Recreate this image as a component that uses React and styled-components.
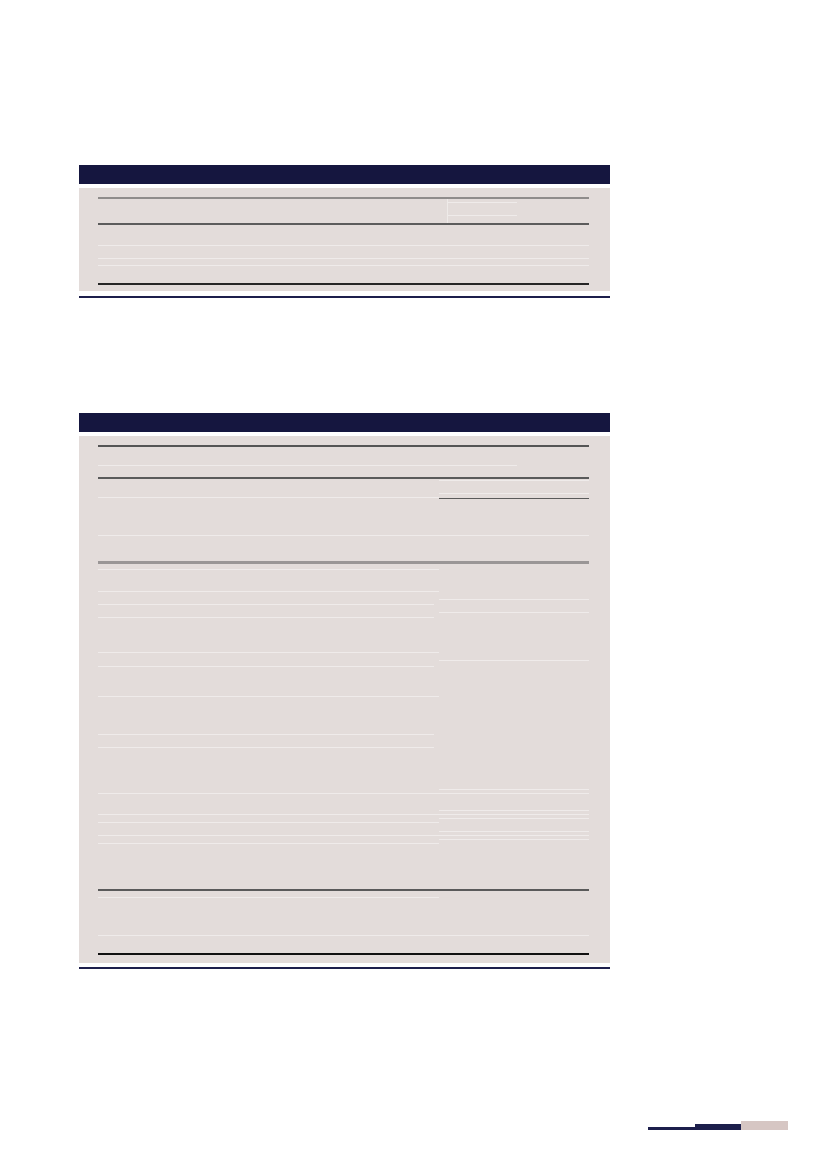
import React from 'react'
import styled, { createGlobalStyle } from 'styled-components'

const GlobalStyle = createGlobalStyle`
  html, body {
    margin: 0;
    padding: 0;
    background: #ffffff;
    font-family: "Liberation Sans", Arial, sans-serif;
  }
  * { box-sizing: border-box; }
`

const Page = styled.div`
  width: 827px;
  height: 1169px;
  padding: 165px 0 0 79px;
  display: flex;
  flex-direction: column;
  background: #fff;
`

const Section = styled.section`
  width: 531px;
  display: flex;
  flex-direction: column;
  margin-bottom: ${p => p.gap || 0}px;
`

const HeaderBar = styled.div`
  height: 19px;
  background: #15163f;
`

const Body = styled.div`
  margin-top: 4px;
  height: ${p => p.h}px;
  background: #e3dcda;
  padding: 9px 21px 0 19px;
`

const BottomRule = styled.div`
  margin-top: ${p => p.m || 5}px;
  height: 2px;
  background: #1d1f4c;
`

const Table = styled.div`
  width: 491px;
  display: flex;
  flex-direction: column;
`

const Rule = styled.div`
  height: ${p => p.t || 1}px;
  background: ${p => p.c || '#555'};
`

const Band = styled.div`
  display: flex;
  height: ${p => p.h}px;
`

const Col = styled.div`
  width: ${p => p.w}px;
  display: flex;
  flex-direction: column;
  border-left: ${p => (p.edge ? '1px solid #eeeae8' : 'none')};
`

const tones = {
  l: '1px solid #efebea',
  d: '1.5px solid #5a5a5a',
  n: 'none',
}

const Seg = styled.div`
  height: ${p => p.h}px;
  flex: none;
  margin-right: ${p => (p.short ? 5 : 0)}px;
  border-bottom: ${p => tones[p.kind]};
`

const Fill = styled.div`
  flex: 1;
`

const Footer = styled.div`
  margin-top: auto;
  margin-bottom: 39px;
  align-self: flex-end;
  margin-right: 39px;
  display: flex;
  align-items: flex-end;
`

const FootBar = styled.div`
  width: ${p => p.w}px;
  height: ${p => p.h}px;
  background: ${p => p.c};
`

// each column: list of [y, kind, short] boundaries measured from page top
function Columns({ top, bottom, cols }) {
  return (
    <Band h={bottom - top}>
      {cols.map((c, i) => {
        let prev = top
        return (
          <Col key={i} w={c.w} edge={c.edge}>
            {c.segs.map(([y, kind, short], j) => {
              const h = y - prev
              prev = y
              return <Seg key={j} h={h} kind={kind} short={short} />
            })}
            <Fill />
          </Col>
        )
      })}
    </Band>
  )
}

function FirstTable() {
  return (
    <Table>
      <Rule t={2} c="#8f8c8b" />
      <Columns
        top={199}
        bottom={223}
        cols={[
          { w: 349, segs: [] },
          { w: 70, edge: true, segs: [[203, 'l'], [216, 'l']] },
          { w: 72, segs: [] },
        ]}
      />
      <Rule t={2} c="#5c5c5c" />
      <Columns
        top={225}
        bottom={283}
        cols={[{ w: 491, segs: [[246, 'l'], [259, 'l'], [266, 'l']] }]}
      />
      <Rule t={2} c="#262626" />
    </Table>
  )
}

function SecondTable() {
  return (
    <Table>
      <Rule t={2} c="#555" />
      <Columns
        top={447}
        bottom={477}
        cols={[
          { w: 419, segs: [[466, 'l']] },
          { w: 72, segs: [] },
        ]}
      />
      <Rule t={2} c="#5a5a5a" />
      <Columns
        top={479}
        bottom={561}
        cols={[
          { w: 341, segs: [[498, 'l'], [536, 'l']] },
          { w: 150, segs: [[481, 'l'], [494, 'l'], [499, 'd'], [536, 'l']] },
        ]}
      />
      <Rule t={3} c="#9a9696" />
      <Columns
        top={564}
        bottom={889}
        cols={[
          {
            w: 341,
            segs: [
              [570, 'l'], [592, 'l'], [605, 'l', true], [618, 'l', true],
              [653, 'l'], [667, 'l', true], [697, 'l'], [735, 'l', true],
              [748, 'l', true], [794, 'l'], [815, 'l'], [823, 'l'],
              [836, 'l'], [844, 'l'],
            ],
          },
          {
            w: 150,
            segs: [
              [600, 'l'], [613, 'l'], [661, 'l'], [790, 'l'], [794, 'l'],
              [811, 'l'], [815, 'l'], [819, 'l'], [832, 'l'], [836, 'l'],
              [840, 'l'],
            ],
          },
        ]}
      />
      <Rule t={2} c="#5a5a5a" />
      <Columns
        top={891}
        bottom={953}
        cols={[
          { w: 341, segs: [[898, 'l'], [936, 'l']] },
          { w: 150, segs: [[936, 'l']] },
        ]}
      />
      <Rule t={2} c="#111" />
    </Table>
  )
}

export default function App() {
  return (
    <>
      <GlobalStyle />
      <Page>
        <Section gap={115}>
          <HeaderBar />
          <Body h={103}>
            <FirstTable />
          </Body>
          <BottomRule />
        </Section>
        <Section>
          <HeaderBar />
          <Body h={527}>
            <SecondTable />
          </Body>
          <BottomRule m={4} />
        </Section>
        <Footer>
          <FootBar w={47} h={3} c="#1d1f4c" />
          <FootBar w={46} h={6} c="#1d1f4c" />
          <FootBar w={47} h={9} c="#d6c6c3" />
        </Footer>
      </Page>
    </>
  )
}
